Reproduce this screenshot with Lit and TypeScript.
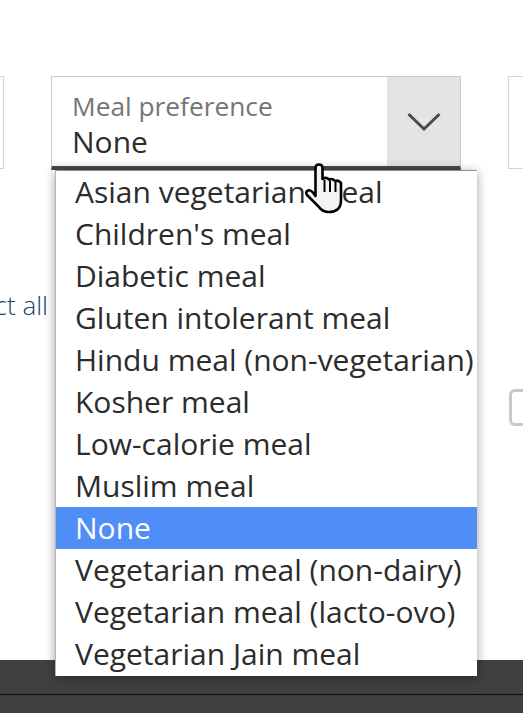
import { LitElement, html, css } from "lit";
import { customElement } from "lit/decorators.js";

const OPTIONS = [
  "Asian vegetarian meal",
  "Children's meal",
  "Diabetic meal",
  "Gluten intolerant meal",
  "Hindu meal (non-vegetarian)",
  "Kosher meal",
  "Low-calorie meal",
  "Muslim meal",
  "None",
  "Vegetarian meal (non-dairy)",
  "Vegetarian meal (lacto-ovo)",
  "Vegetarian Jain meal",
];

@customElement("app-root")
export class AppRoot extends LitElement {
  static styles = css`
    :host {
      display: block;
      position: relative;
      width: 523px;
      height: 713px;
      overflow: hidden;
      background: #fff;
      font-family: "Open Sans", "Noto Sans", sans-serif;
      color: #2c2c2c;
    }
    .content {
      height: 660px;
      padding-top: 76px;
      box-sizing: border-box;
      overflow: hidden;
    }
    .fields {
      display: grid;
      grid-template-columns: 4px 410px 15px;
      column-gap: 47px;
      height: 94px;
    }
    .stub {
      box-sizing: border-box;
      height: 93px;
      border: 1px solid #d4d4d4;
    }
    .stub.left {
      border-left: none;
    }
    .stub.right {
      border-right: none;
    }
    .select {
      box-sizing: border-box;
      height: 94px;
      display: flex;
      border: 1px solid #c8c8c8;
      border-bottom: 4px solid #47474c;
    }
    .value-box {
      flex: 1;
      min-width: 0;
      padding: 13px 0 0 20px;
      display: flex;
      flex-direction: column;
      background: linear-gradient(#fff 92%, #f6f6f6);
    }
    .label {
      font-size: 26.3px;
      line-height: 32px;
      color: #757575;
    }
    .value {
      font-size: 30px;
      line-height: 42px;
      margin-top: -1px;
    }
    .arrow {
      width: 73px;
      display: flex;
      align-items: center;
      justify-content: center;
      background: linear-gradient(#e4e4e4 90%, #dedede);
    }
    .arrow svg {
      width: 34px;
      height: 20px;
      margin-top: 1px;
    }
    .select-all {
      margin: 119px 0 0 -54px;
      font-size: 26px;
      line-height: 32px;
      font-weight: 300;
      color: #1c3f66;
      white-space: nowrap;
    }
    .check-row {
      display: flex;
      justify-content: flex-end;
      margin-top: 68px;
    }
    .check {
      box-sizing: border-box;
      width: 14px;
      height: 37px;
      border: 3px solid #c9c9c9;
      border-right: none;
      border-radius: 6px 0 0 6px;
    }
    .footer {
      height: 53px;
      background: #404040;
      display: flex;
      flex-direction: column;
    }
    .footer .line {
      height: 1px;
      margin-top: 34px;
      background: #0c0c0c;
    }
    .menu {
      position: absolute;
      left: 55px;
      top: 170px;
      width: 422px;
      box-sizing: border-box;
      background: #fff;
      border-top: 1px solid #8f8f8f;
      border-left: 1px solid #b5b5b5;
      padding-bottom: 1px;
      box-shadow: 0 2px 10px rgba(0, 0, 0, 0.38);
    }
    .option {
      height: 42px;
      line-height: 42px;
      padding-left: 19px;
      font-size: 30px;
      white-space: nowrap;
    }
    .option.selected {
      background: #4f8ef7;
      color: #fff;
    }
    .cursor {
      position: absolute;
      left: 300px;
      top: 160px;
      width: 50px;
      height: 60px;
    }
  `;

  render() {
    return html`
      <div class="content">
        <div class="fields">
          <div class="stub left"></div>
          <div class="select">
            <div class="value-box">
              <span class="label">Meal preference</span>
              <span class="value">None</span>
            </div>
            <div class="arrow">
              <svg viewBox="0 0 34 20" fill="none">
                <path d="M1.5 2 L17 17 L32.5 2" stroke="#4a4a4a" stroke-width="3" />
              </svg>
            </div>
          </div>
          <div class="stub right"></div>
        </div>
        <div class="select-all">Select all</div>
        <div class="check-row"><div class="check"></div></div>
      </div>
      <div class="footer"><div class="line"></div></div>
      <div class="menu">
        ${OPTIONS.map(
          (o) => html`<div class="option ${o === "None" ? "selected" : ""}">${o}</div>`
        )}
      </div>
      <svg class="cursor" viewBox="0 0 50 60">
        <path
          d="M15.5 36 L15.5 8 Q15.5 4.5 19 4.5 Q22.5 4.5 22.5 8 L22.5 19 Q26 16.5 29 19.5 Q32.5 18 35 21 Q38.5 19.5 41 23 L41 40 Q41 46 38 49 Q34 52.5 28 52 Q22 51.5 19 47 L7 35 Q5 32 8 30.5 Q11 29 15.5 36 Z"
          fill="#f2f4f3"
          stroke="#000"
          stroke-width="2.6"
          stroke-linejoin="round"
        />
        <path d="M24.5 20 L24.5 32 M30 20.5 L30 32 M35.5 22 L35.5 32" stroke="#000" stroke-width="2" fill="none" />
      </svg>
    `;
  }
}
